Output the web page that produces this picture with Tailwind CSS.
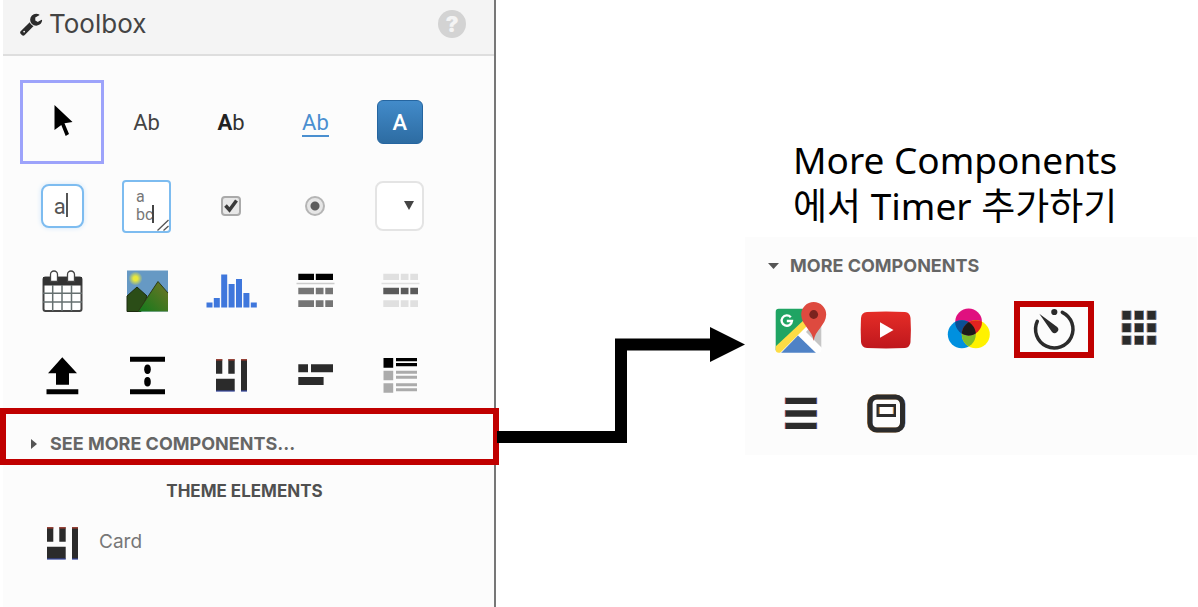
<!DOCTYPE html>
<html lang="ko">
<head>
  <meta charset="utf-8">
  <meta name="viewport" content="width=device-width, initial-scale=1">
  <title>Toolbox</title>
  <script src="https://cdn.jsdelivr.net/npm/@tailwindcss/browser@4"></script>
</head>
<body class="bg-white text-black font-[Inter,'Noto_Sans_CJK_KR',sans-serif]">
<div class="flex min-h-screen">

  <!-- Toolbox sidebar -->
  <aside class="ml-[3px] w-[493px] shrink-0 bg-[#fcfcfc] border-r-2 border-[#777]">
    <header class="flex items-center justify-between h-14 pl-4 pr-7 pb-[6px] bg-[#f4f4f4] border-b-2 border-[#dedede]">
      <h1 class="flex items-center gap-[6px] text-[26px] leading-8 text-[#444]">
        <svg class="size-6" viewBox="0 0 1792 1792" fill="#2b2b2b" aria-hidden="true"><path d="M448 1472q0-26-19-45t-45-19-45 19-19 45 19 45 45 19 45-19 19-45zm644-420l-682 682q-37 37-90 37-52 0-91-37l-106-108q-38-36-38-90 0-53 38-91l681-681q39 98 114.500 173.500t173.500 114.500zm634-435q0 39-23 106-47 134-164.500 217.500t-258.500 83.500q-185 0-316.500-131.500t-131.500-316.500 131.500-316.500 316.500-131.500q58 0 121.500 16.500t107.500 46.500q16 11 16 28t-16 28l-293 169v224l193 107q5-3 79-48.500t135.500-81 70.500-35.500q15 0 23.500 10t8.500 25z"/></svg>
        Toolbox
      </h1>
      <button class="size-7 rounded-full bg-[#d3d3d3] text-[#f4f4f4] text-[22px] leading-7 font-black" title="Help">?</button>
    </header>

    <!-- Components -->
    <div class="grid grid-cols-5 auto-rows-[84px] pt-6 pl-[17px] pr-[52px] font-[Roboto,sans-serif]">
      <button class="flex items-center justify-center border-3 border-[#9da3fb]" title="Select">
        <svg class="size-14 shrink-0" viewBox="0 0 56 56"><path d="M20.500 11L38.500 28L30.500 29.300L35 40L31.700 42L27.300 31L20.500 36Z"/></svg>
      </button>
      <button class="text-[22px] text-[#444]" title="Label">Ab</button>
      <button class="text-[22px] text-[#333]" title="Rich text"><b class="font-bold text-[#222]">A</b>b</button>
      <div class="flex items-center justify-center pt-[3px]">
        <a href="#" class="text-[22px] leading-6 text-[#4a8fd0] border-b-2 border-[#4a8fd0]" title="Link">Ab</a>
      </div>
      <div class="flex items-center justify-center">
        <button class="w-[46px] h-11 rounded-md border border-[#2565a0] bg-linear-to-b from-[#428bca] to-[#2d6ca2] text-[22px] font-medium text-white" title="Button">A</button>
      </div>

      <div class="flex items-center justify-center">
        <label class="relative">
          <input type="text" value="a" aria-label="Text box" class="block w-[43px] h-11 pl-[11px] rounded-lg border-2 border-[#7dbcf0] bg-white text-[22px] text-[#555] shadow-[0_0_5px_#cfe6fa]">
          <span class="absolute left-[25px] top-[9px] w-[2px] h-6 bg-[#555]"></span>
        </label>
      </div>
      <div class="flex items-center justify-center">
        <label class="relative">
          <textarea aria-label="Text area" class="block w-[49px] h-[53px] pl-3 pt-[6px] resize-none overflow-hidden rounded-sm border-2 border-[#7dbcf0] bg-white text-[16px] leading-[18px] text-[#777]">a
bc</textarea>
          <span class="absolute left-[30px] top-[25px] w-[2px] h-[18px] bg-[#444]"></span>
          <svg class="absolute right-[2px] bottom-[2px] size-3" viewBox="0 0 12 12" stroke="#555" stroke-width="1.300"><path d="M.5 11.500L11.500 1M6.500 11.500L11.500 7"/></svg>
        </label>
      </div>
      <div class="flex items-center justify-center">
        <label class="relative">
          <input type="checkbox" checked aria-label="Check box" class="block size-5 appearance-none rounded-sm border-2 border-[#aaa] bg-[#e8e8e8]">
          <svg class="absolute inset-0 size-5" viewBox="0 0 20 20" fill="none" stroke="#3a3a3a" stroke-width="3.500"><path d="M4.500 9.500L8.500 14L15.500 4.500"/></svg>
        </label>
      </div>
      <div class="flex items-center justify-center">
        <input type="radio" checked aria-label="Radio button" class="size-5 appearance-none rounded-full border-2 border-[#b5b5b5] bg-[radial-gradient(circle,#5c5c5c_4px,#e6e6e6_5px)]">
      </div>
      <div class="flex items-center justify-center">
        <label class="relative">
          <select aria-label="Dropdown" class="block w-[49px] h-[50px] appearance-none rounded-lg border-2 border-[#e4e4e4] bg-white"><option></option></select>
          <svg class="absolute right-[10px] top-5 w-[10px] h-[9px]" viewBox="0 0 10 9" fill="#444"><path d="M0 0H10L5 9Z"/></svg>
        </label>
      </div>

      <button class="flex items-center justify-center" title="Date picker">
        <svg class="size-14 shrink-0" viewBox="0 0 56 56">
          <rect x="9.500" y="15.500" width="38" height="33.500" rx="2" fill="#fff" stroke="#444" stroke-width="2"/>
          <path d="M9 15H48V23.500H9Z" fill="#333"/>
          <path d="M18.700 23V49M28 23V49M37.500 23V49M9 31.300H48M9 40H48" stroke="#667070" stroke-width="1.500"/>
          <path d="M16.500 19.500V12.500a3.500 3.500 0 0 1 7 0V19.500ZM33.500 19.500V12.500a3.500 3.500 0 0 1 7 0V19.500Z" fill="#fff" stroke="#444" stroke-width="1.300"/>
        </svg>
      </button>
      <button class="flex items-center justify-center" title="Image">
        <svg class="size-14 shrink-0" viewBox="0 0 56 56">
          <defs>
            <radialGradient id="sun"><stop offset=".3" stop-color="#e8e83c"/><stop offset="1" stop-color="#e8e83c" stop-opacity="0"/></radialGradient>
            <linearGradient id="hill" x1="1" y1="0" x2="0" y2="1"><stop offset=".2" stop-color="#5e7523"/><stop offset="1" stop-color="#117a1c"/></linearGradient>
          </defs>
          <rect x="8" y="8.500" width="41" height="41" fill="#6699c4"/>
          <circle cx="16.500" cy="16.500" r="7" fill="url(#sun)"/>
          <path d="M8 34L18 25L28 34L22 49.500H8Z" fill="#2b4d17" stroke="#1c2c10"/>
          <path d="M49 31L39 19.500L19 49.500H49Z" fill="url(#hill)"/>
          <path d="M49 31L39 19.500L19 49.500" fill="none" stroke="#2c3a14"/>
        </svg>
      </button>
      <button class="flex items-center justify-center" title="Chart">
        <svg class="size-14 shrink-0" viewBox="0 0 56 56" fill="#3f77dc"><path d="M3.500 40.500h6v5h-6ZM10.800 36h6v9.500h-6ZM18.200 12.500h6v33h-6ZM25.600 22h6v23.500h-6ZM33 17h6v28.500h-6ZM40.400 31h6v14.500h-6ZM47.800 40.500h6v5h-6Z"/></svg>
      </button>
      <button class="flex items-center justify-center" title="Table">
        <svg class="size-14 shrink-0" viewBox="0 0 56 56">
          <path d="M11.300 11.700H27V18H11.300ZM28.800 11.700H46V18H28.800Z"/>
          <path d="M9.500 20.700H47.500V22.300H9.500Z" fill="#ccc"/>
          <path d="M11.300 25.700H27V32.300H11.300ZM28.800 25.700H36.500V32.300H28.800ZM38.300 25.700H46V32.300H38.300ZM11.300 38.300H27V45H11.300ZM28.800 38.300H36.500V45H28.800ZM38.300 38.300H46V45H38.300Z" fill="#757575"/>
        </svg>
      </button>
      <button class="flex items-center justify-center" title="Table row">
        <svg class="size-14 shrink-0" viewBox="0 0 56 56">
          <path d="M11.300 11.700H27V18H11.300ZM28.800 11.700H36.500V18H28.800ZM38.300 11.700H46V18H38.300ZM9.500 20.700H47.500V22.300H9.500ZM11.300 38.300H27V45H11.300ZM28.800 38.300H36.500V45H28.800ZM38.300 38.300H46V45H38.300Z" fill="#e0e0e0"/>
          <path d="M11.300 25.700H27V32.300H11.300ZM28.800 25.700H36.500V32.300H28.800ZM38.300 25.700H46V32.300H38.300Z" fill="#5a5a5a"/>
        </svg>
      </button>

      <button class="flex items-center justify-center" title="File upload">
        <svg class="size-14 shrink-0" viewBox="0 0 56 56"><path d="M28.300 11.300L43 27.300H35V38.700H22V27.300H14ZM12.500 43.300H44.300V48.300H12.500Z"/></svg>
      </button>
      <button class="flex items-center justify-center" title="Spacer">
        <svg class="size-14 shrink-0" viewBox="0 0 56 56">
          <path d="M11 10.700H46V15.700H11ZM11 43.300H46V48.300H11Z"/>
          <ellipse cx="28.500" cy="23.300" rx="3.300" ry="4.800"/>
          <ellipse cx="28.500" cy="35.700" rx="3.300" ry="4.800"/>
        </svg>
      </button>
      <button class="flex items-center justify-center" title="Column panel">
        <svg class="size-14 shrink-0" viewBox="0 0 56 56">
          <path d="M13 13.300H19.300V27.700H13ZM25.300 13.300H31.700V27.700H25.300ZM38 13.300H44V45.300H38ZM13 32.700H31.700V45.300H13Z" fill="#2b2b2b"/>
          <path d="M13 13.300H19.300V14.500H13ZM25.300 13.300H31.700V14.500H25.300ZM38 13.300H44V14.500H38Z" fill="#a83a2c"/>
          <path d="M13 44.500H31.700V45.500H13ZM38 44.500H44V45.500H38Z" fill="#3a4fb8"/>
        </svg>
      </button>
      <button class="flex items-center justify-center" title="Flow panel">
        <svg class="size-14 shrink-0" viewBox="0 0 56 56" fill="#2b2b2b"><path d="M11.300 18.300H21V26.300H11.300ZM24 18.300H46V26.300H24ZM11.300 31H36.600V39H11.300Z"/></svg>
      </button>
      <button class="flex items-center justify-center" title="Repeating panel">
        <svg class="size-14 shrink-0" viewBox="0 0 56 56">
          <path d="M11.500 12H21.200V21.700H11.500ZM24 12H45V15.200H24ZM24 17H45V20.200H24Z"/>
          <path d="M11.500 24.700H21.200V34.300H11.500ZM24 24.700H45V27.700H24ZM24 29.700H45V32.700H24ZM11.500 37.300H21.200V46.700H11.500ZM24 37.300H45V40.300H24ZM24 42.300H45V45.300H24Z" fill="#ababab"/>
        </svg>
      </button>
    </div>

    <button class="relative flex items-center gap-3 -ml-[3px] -mt-2 w-[499px] h-[57px] pl-6 pt-[14px] border-[6px] border-[#c00000] text-[18px] leading-6 font-bold text-[#666]">
      <svg class="w-2 h-3" viewBox="0 0 8 12" fill="#555" aria-hidden="true"><path d="M1 1L7 6L1 11Z"/></svg>
      SEE MORE COMPONENTS...
    </button>

    <h2 class="mt-[14px] pr-2 text-center text-[17px] leading-6 font-bold text-[#505050]">THEME ELEMENTS</h2>
    <button class="flex items-center gap-[9px] mt-[11px] ml-[31px] text-[19px] text-[#777]">
      <svg class="size-14 shrink-0" viewBox="0 0 56 56" aria-hidden="true">
        <path d="M13 13.300H19.300V27.700H13ZM25.300 13.300H31.700V27.700H25.300ZM38 13.300H44V45.300H38ZM13 32.700H31.700V45.300H13Z" fill="#2b2b2b"/>
        <path d="M13 13.300H19.300V14.500H13ZM25.300 13.300H31.700V14.500H25.300ZM38 13.300H44V14.500H38Z" fill="#a83a2c"/>
        <path d="M13 44.500H31.700V45.500H13ZM38 44.500H44V45.500H38Z" fill="#3a4fb8"/>
      </svg>
      Card
    </button>
  </aside>

  <!-- Arrow from sidebar to panel -->
  <svg class="relative mt-[327px] w-[249px] h-[117px] shrink-0" viewBox="0 0 249 117" aria-hidden="true">
    <path d="M1 104H119V11.500H214V0L249 17.500L214 35V23.500H131V116H1Z"/>
  </svg>

  <!-- More components -->
  <main class="flex-1 min-w-0 pt-[137px] pr-px">
    <h2 class="pl-12 pb-2 text-[37px] leading-[46px] font-['Noto_Sans','Noto_Sans_CJK_KR',sans-serif]">More Components<br>에서 Timer 추가하기</h2>
    <section class="bg-[#fcfcfc] pl-[13px] pr-4">
      <button class="flex items-center gap-[11px] h-[50px] pt-2 pl-[10px] text-[18px] leading-6 font-bold text-[#666]">
        <svg class="w-[11px] h-[6px]" viewBox="0 0 11 6" fill="#555" aria-hidden="true"><path d="M0 0H11L5.500 6Z"/></svg>
        MORE COMPONENTS
      </button>
      <div class="grid grid-cols-5 auto-rows-[84px] -mb-1">
        <button class="flex items-center justify-center" title="Google Map">
          <svg class="size-14 shrink-0" viewBox="0 0 56 56">
            <defs><clipPath id="tile"><rect x="3.700" y="7.700" width="45.600" height="44" rx="3"/></clipPath></defs>
            <g clip-path="url(#tile)">
              <path d="M3 7H50V52H3Z" fill="#fff"/>
              <path d="M3 7H42L38 18L3 50Z" fill="#1fa463"/>
              <path d="M34 31L50 12V47Z" fill="#c6c6c6"/>
              <path d="M3 46L33 18L38 22L8 52H3Z" fill="#fddc45"/>
              <path d="M9 52L26 34.500L44 52Z" fill="#4f82c6"/>
            </g>
            <path d="M18.800 16.200A5.200 5.200 0 1 0 20 20H14.800" fill="none" stroke="#fff" stroke-width="2.300"/>
            <path d="M41.700 40C41 30 29.200 24 29.200 13.500A12.500 12.500 0 0 1 54.200 13.500C54.200 24 42.400 30 41.700 40Z" fill="#de4a3f"/>
            <circle cx="41.700" cy="13.500" r="4.400" fill="#7a231e"/>
          </svg>
        </button>
        <button class="flex items-center justify-center" title="YouTube video">
          <svg class="size-14 shrink-0" viewBox="0 0 56 56">
            <defs><linearGradient id="tube" x2="0" y2="1"><stop stop-color="#e52d27"/><stop offset="1" stop-color="#bf171d"/></linearGradient></defs>
            <path d="M10 11Q29 10 48 11Q53 11.500 53.500 17Q54.300 29 53.500 41Q53 46.500 48 47Q29 47.800 10 47Q4.500 46.500 4 41Q3.400 29 4 17Q4.500 11.500 10 11Z" fill="url(#tube)"/>
            <path d="M23 21.300L36.500 29L23 36.700Z" fill="#fff"/>
          </svg>
        </button>
        <button class="flex items-center justify-center" title="Canvas">
          <svg class="size-14 shrink-0" viewBox="0 0 56 56">
            <defs>
              <clipPath id="cyan"><circle cx="20.800" cy="33.300" r="14"/></clipPath>
              <clipPath id="yellow"><circle cx="34.800" cy="33.300" r="14"/></clipPath>
            </defs>
            <circle cx="27.600" cy="21" r="13.400" fill="#e0107f"/>
            <circle cx="20.800" cy="33.300" r="14" fill="#0090df"/>
            <circle cx="34.800" cy="33.300" r="14" fill="#fff200"/>
            <circle cx="34.800" cy="33.300" r="14" fill="#7dbb2a" clip-path="url(#cyan)"/>
            <circle cx="27.600" cy="21" r="13.400" fill="#0a4f94" clip-path="url(#cyan)"/>
            <g clip-path="url(#yellow)">
              <circle cx="27.600" cy="21" r="13.400" fill="#e2231f"/>
              <g clip-path="url(#cyan)"><circle cx="27.600" cy="21" r="13.400" fill="#1c1a19"/></g>
            </g>
          </svg>
        </button>
        <div class="flex items-center justify-center">
          <button class="flex items-center justify-center w-20 h-[57px] border-[6px] border-[#c00000]" title="Timer">
            <svg class="size-14 shrink-0" viewBox="0 0 56 56">
              <path d="M36.300 11.300A18.700 18.700 0 1 1 11.300 20.300" fill="none" stroke="#2b2b2b" stroke-width="3.500" stroke-linecap="round"/>
              <circle cx="28.300" cy="11" r="3.100" fill="#2b2b2b"/>
              <path d="M13.300 12.800L31.200 26A3.500 3.500 0 1 1 26 31Z" fill="#2b2b2b"/>
            </svg>
          </button>
        </div>
        <button class="flex items-center justify-center" title="Data grid">
          <svg class="size-14 shrink-0" viewBox="0 0 56 56">
            <path d="M11 9.700h9v9h-9ZM23.500 9.700h9v9h-9ZM36 9.700h9v9h-9ZM11 22.200h9v9h-9ZM23.500 22.200h9v9h-9ZM36 22.200h9v9h-9ZM11 34.700h9v9h-9ZM23.500 34.700h9v9h-9ZM36 34.700h9v9h-9Z" fill="#2b2b2b"/>
            <path d="M11 9.700v9M23.500 9.700v9M36 9.700v9M11 22.200v9M23.500 22.200v9M36 22.200v9M11 34.700v9M23.500 34.700v9M36 34.700v9" stroke="#c98f6c"/>
            <path d="M20 9.700v9M32.500 9.700v9M45 9.700v9M20 22.200v9M32.500 22.200v9M45 22.200v9M20 34.700v9M32.500 34.700v9M45 34.700v9" stroke="#4f7fc0"/>
          </svg>
        </button>
        <button class="flex items-center justify-center" title="Linear panel">
          <svg class="size-14 shrink-0" viewBox="0 0 56 56">
            <path d="M13.300 12.700H44.700V19H13.300ZM13.300 25.300H44.700V31.700H13.300ZM13.300 37.700H44.700V44H13.300Z" fill="#2b2b2b"/>
            <path d="M13.300 12.700V19M13.300 25.300V31.700M13.300 37.700V44" stroke="#a8443a"/>
            <path d="M44.700 12.700V19M44.700 25.300V31.700M44.700 37.700V44" stroke="#3a55b0"/>
          </svg>
        </button>
        <button class="flex items-center justify-center" title="XY panel">
          <svg class="size-14 shrink-0" viewBox="0 0 56 56" fill="none">
            <rect x="12.500" y="12" width="33" height="33" rx="7" stroke="#d99a52" stroke-width="5"/>
            <rect x="13.500" y="12" width="33" height="33" rx="7" stroke="#6a8fd0" stroke-width="4"/>
            <rect x="13" y="12" width="32.500" height="33" rx="7" stroke="#2b2b2b" stroke-width="5"/>
            <rect x="21" y="20.500" width="16.500" height="10" stroke="#2b2b2b" stroke-width="3"/>
            <path d="M22.300 22V29M36.300 22V29" stroke="#d99a52"/>
          </svg>
        </button>
      </div>
    </section>
  </main>

</div>
</body>
</html>
